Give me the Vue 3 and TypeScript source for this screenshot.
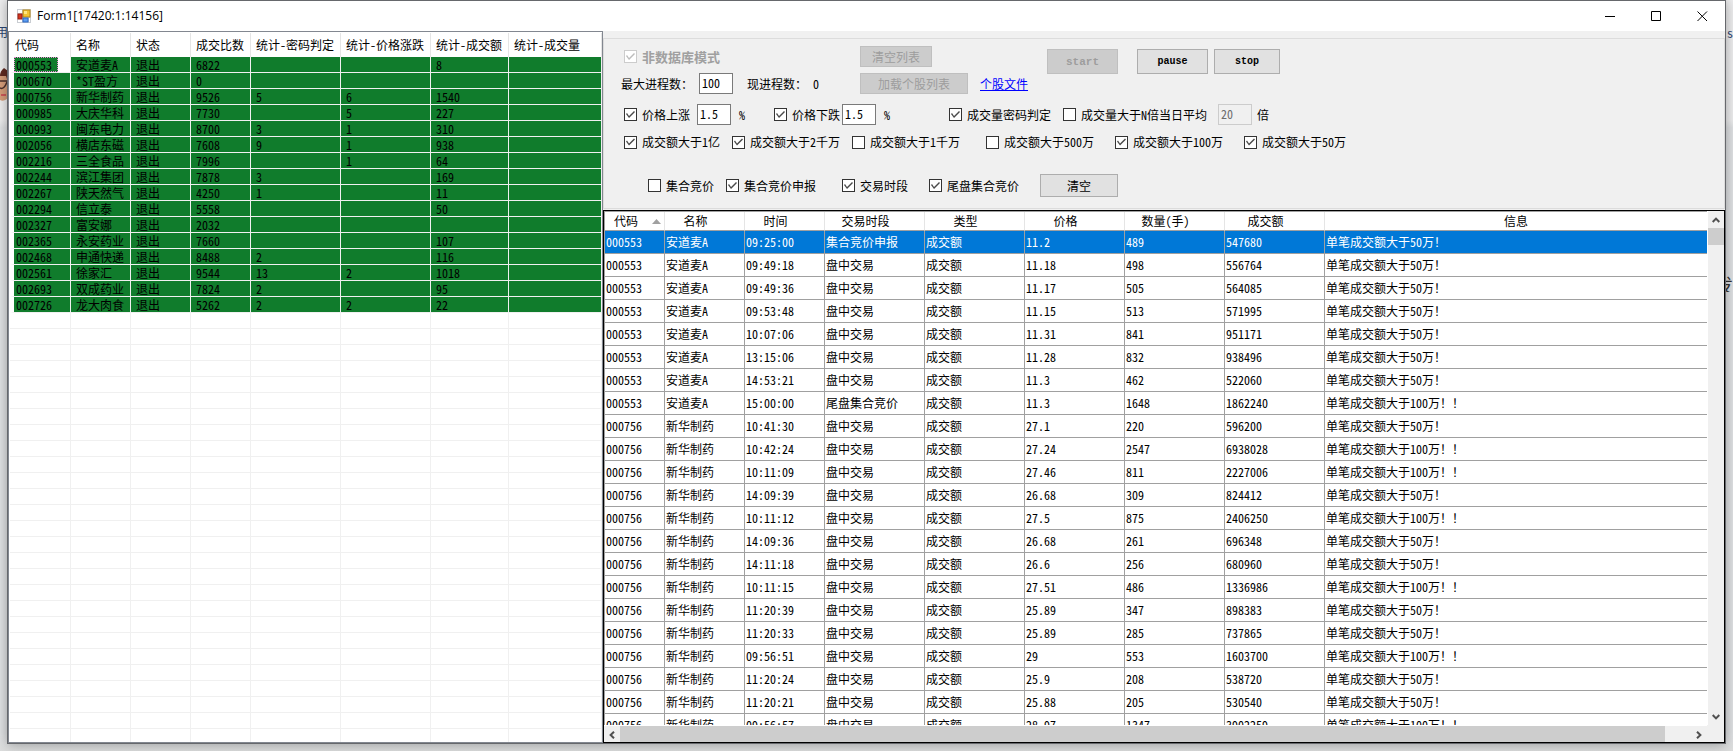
<script setup lang="ts">
import { ref } from 'vue'

interface Stock {
  code: string
  name: string
  count: string
  secret: string
  price: string
  amount: string
}

const stock = (line: string): Stock => {
  const [code, name, count, secret, price, amount] = line.split('|')
  return { code, name, count, secret, price, amount }
}

const stocks: Stock[] = [
  '000553|安道麦A|6822|||8',
  '000670|*ST盈方|0|||',
  '000756|新华制药|9526|5|6|1540',
  '000985|大庆华科|7730||5|227',
  '000993|闽东电力|8700|3|1|310',
  '002056|横店东磁|7608|9|1|938',
  '002216|三全食品|7996||1|64',
  '002244|滨江集团|7878|3||169',
  '002267|陕天然气|4250|1||11',
  '002294|信立泰|5558|||50',
  '002327|富安娜|2032|||',
  '002365|永安药业|7660|||107',
  '002468|申通快递|8488|2||116',
  '002561|徐家汇|9544|13|2|1018',
  '002693|双成药业|7824|2||95',
  '002726|龙大肉食|5262|2|2|22',
].map(stock)

const listHeads = ['代码', '名称', '状态', '成交比数', '统计-密码判定', '统计-价格涨跌', '统计-成交额', '统计-成交量']
const tradeHeads = ['代码', '名称', '时间', '交易时段', '类型', '价格', '数量(手)', '成交额', '信息']

const A = '安道麦A'
const X = '新华制药'
const MID = '盘中交易'

const raw: [string, string, string, string, string, string, string][] = [
  ['000553', A, '09:25:00', '集合竞价申报', '11.2', '489', '547680'],
  ['000553', A, '09:49:18', MID, '11.18', '498', '556764'],
  ['000553', A, '09:49:36', MID, '11.17', '505', '564085'],
  ['000553', A, '09:53:48', MID, '11.15', '513', '571995'],
  ['000553', A, '10:07:06', MID, '11.31', '841', '951171'],
  ['000553', A, '13:15:06', MID, '11.28', '832', '938496'],
  ['000553', A, '14:53:21', MID, '11.3', '462', '522060'],
  ['000553', A, '15:00:00', '尾盘集合竞价', '11.3', '1648', '1862240'],
  ['000756', X, '10:41:30', MID, '27.1', '220', '596200'],
  ['000756', X, '10:42:24', MID, '27.24', '2547', '6938028'],
  ['000756', X, '10:11:09', MID, '27.46', '811', '2227006'],
  ['000756', X, '14:09:39', MID, '26.68', '309', '824412'],
  ['000756', X, '10:11:12', MID, '27.5', '875', '2406250'],
  ['000756', X, '14:09:36', MID, '26.68', '261', '696348'],
  ['000756', X, '14:11:18', MID, '26.6', '256', '680960'],
  ['000756', X, '10:11:15', MID, '27.51', '486', '1336986'],
  ['000756', X, '11:20:39', MID, '25.89', '347', '898383'],
  ['000756', X, '11:20:33', MID, '25.89', '285', '737865'],
  ['000756', X, '09:56:51', MID, '29', '553', '1603700'],
  ['000756', X, '11:20:24', MID, '25.9', '208', '538720'],
  ['000756', X, '11:20:21', MID, '25.88', '205', '530540'],
  ['000756', X, '09:56:57', MID, '28.97', '1347', '3902259'],
]

const trades = raw.map(([code, name, time, phase, price, lots, amount]) => [
  code, name, time, phase, '成交额', price, lots, amount,
  Number(amount) > 1000000 ? '单笔成交额大于100万！！' : '单笔成交额大于50万！',
])

const selected = ref(0)
const limit = ref('100')
const riseBy = ref('1.5')
const fallBy = ref('1.5')
const times = ref('20')

const amountFilters = ref([
  { label: '成交额大于1亿', on: true },
  { label: '成交额大于2千万', on: true },
  { label: '成交额大于1千万', on: false },
  { label: '成交额大于500万', on: false },
  { label: '成交额大于100万', on: true },
  { label: '成交额大于50万', on: true },
])
const phaseFilters = ref([
  { label: '集合竞价', on: false },
  { label: '集合竞价申报', on: true },
  { label: '交易时段', on: true },
  { label: '尾盘集合竞价', on: true },
])
</script>

<template>
  <div class="desktop">
    <div class="behind behind-left" aria-hidden="true">
      <span class="scrap">用</span>
      <svg class="face" width="14" height="34" viewBox="0 0 14 34">
        <path d="M0 8 Q0 3 4 0 L8 3 L7 12 L0 12Z" fill="#612b22" />
        <path d="M0 8H6L8 14V30Q4 34 0 32Z" fill="#d9a07c" />
        <path d="M0 13H8M0 20Q4 22 7 14" stroke="#4b302c" stroke-width="1.5" fill="none" />
        <path d="M1 27H6" stroke="#cf5a5a" stroke-width="2" />
      </svg>
    </div>
    <div class="behind behind-right" aria-hidden="true">
      <span class="scrap">s</span>
      <span class="scrap big">发</span>
    </div>

    <main class="window">
      <header class="titlebar">
        <svg class="app-icon" width="14" height="14" viewBox="0 0 14 14">
          <rect x="0" y="0" width="14" height="14" fill="#c9cdd2" />
          <path d="M1 1H5V4H1ZM1 10H5V13H1ZM12 9H13V13H12Z" fill="#fff" />
          <rect x="6" y="1" width="7" height="7" fill="#f3c334" stroke="#b98a17" />
          <rect x="7" y="2" width="3" height="3" fill="#ffe680" />
          <rect x="1" y="5" width="4" height="5" fill="#d3371f" stroke="#9c1f12" />
          <rect x="6" y="9" width="5" height="4" fill="#5c9df0" stroke="#2d68c4" />
        </svg>
        <h1>Form1[17420:1:14156]</h1>
        <div class="win-buttons">
          <button type="button" aria-label="最小化"><svg width="11" height="11" viewBox="0 0 11 11"><path d="M0 5.5H10" stroke="#000" fill="none" /></svg></button>
          <button type="button" aria-label="最大化"><svg width="11" height="11" viewBox="0 0 11 11"><path d="M.5 .5H9.5V9.5H.5Z" stroke="#000" fill="none" /></svg></button>
          <button type="button" aria-label="关闭"><svg width="11" height="11" viewBox="0 0 11 11"><path d="M.5 .5L10 10M10 .5L.5 10" stroke="#000" fill="none" /></svg></button>
        </div>
      </header>

      <div class="body">
        <section class="list">
          <table>
            <colgroup>
              <col class="l-first"><col class="l-s"><col class="l-s"><col class="l-s">
              <col class="l-m"><col class="l-m"><col class="l-n"><col>
            </colgroup>
            <thead>
              <tr><th v-for="h in listHeads" :key="h">{{ h }}</th></tr>
            </thead>
            <tbody>
              <tr v-for="(s, i) in stocks" :key="s.code" class="filled" :class="{ focus: i === 0 }">
                <td><span>{{ s.code }}</span></td>
                <td>{{ s.name }}</td>
                <td>退出</td>
                <td>{{ s.count }}</td>
                <td>{{ s.secret }}</td>
                <td>{{ s.price }}</td>
                <td>{{ s.amount }}</td>
                <td></td>
              </tr>
              <tr v-for="n in 40" :key="n"><td v-for="h in listHeads" :key="h"></td></tr>
            </tbody>
          </table>
        </section>

        <section class="right">
          <form class="controls" @submit.prevent>
            <div class="top">
              <div class="top-left">
                <div class="row row-a">
                  <label class="check strong off"><input type="checkbox" checked disabled>非数据库模式</label>
                  <button type="button" class="btn" disabled>清空列表</button>
                </div>
                <div class="row row-b">
                  <label for="limit">最大进程数：</label>
                  <input id="limit" v-model="limit" class="box" type="text">
                  <span>现进程数：</span>
                  <span>0</span>
                  <button type="button" class="btn" disabled>加载个股列表</button>
                  <a href="#">个股文件</a>
                </div>
              </div>
              <div class="actions">
                <button type="button" class="btn" disabled>start</button>
                <button type="button" class="btn">pause</button>
                <button type="button" class="btn">stop</button>
              </div>
            </div>
            <div class="row row-c">
              <label class="check"><input type="checkbox" checked>价格上涨</label>
              <input v-model="riseBy" class="box" type="text" aria-label="价格上涨">
              <span>%</span>
              <label class="check"><input type="checkbox" checked>价格下跌</label>
              <input v-model="fallBy" class="box" type="text" aria-label="价格下跌">
              <span>%</span>
              <label class="check"><input type="checkbox" checked>成交量密码判定</label>
              <label class="check"><input type="checkbox">成交量大于N倍当日平均</label>
              <input v-model="times" class="box" type="text" aria-label="倍数" disabled>
              <span>倍</span>
            </div>
            <div class="row row-d">
              <label v-for="f in amountFilters" :key="f.label" class="check"><input v-model="f.on" type="checkbox">{{ f.label }}</label>
            </div>
            <div class="row row-e">
              <label v-for="f in phaseFilters" :key="f.label" class="check"><input v-model="f.on" type="checkbox">{{ f.label }}</label>
              <button type="button" class="btn">清空</button>
            </div>
          </form>

          <div class="grid">
            <div class="grid-view">
              <table>
                <colgroup>
                  <col class="g-code"><col class="g-name"><col class="g-name">
                  <col class="g-m"><col class="g-m"><col class="g-m"><col class="g-m"><col class="g-m"><col>
                </colgroup>
                <thead>
                  <tr>
                    <th v-for="(h, i) in tradeHeads" :key="h">
                      <div>{{ h }}<svg v-if="i === 0" width="9" height="5" viewBox="0 0 9 5"><path d="M0 5L4.5 0L9 5Z" fill="#a0a0a0" /></svg></div>
                    </th>
                  </tr>
                </thead>
                <tbody>
                  <tr v-for="(t, i) in trades" :key="i" :class="{ selected: i === selected }" @click="selected = i">
                    <td v-for="(c, j) in t" :key="j">{{ c }}</td>
                  </tr>
                </tbody>
              </table>
            </div>
            <div class="vbar">
              <button type="button" aria-label="向上"><svg width="8" height="6" viewBox="0 0 8 6"><path d="M.7 5L4 1.6L7.3 5" /></svg></button>
              <div class="v-thumb"></div>
              <div class="v-track"></div>
              <button type="button" aria-label="向下"><svg width="8" height="6" viewBox="0 0 8 6"><path d="M.7 1L4 4.4L7.3 1" /></svg></button>
            </div>
            <div class="hbar">
              <button type="button" aria-label="向左"><svg width="6" height="8" viewBox="0 0 6 8"><path d="M5 .7L1.6 4L5 7.3" /></svg></button>
              <div class="h-thumb"></div>
              <div class="h-track"></div>
              <button type="button" aria-label="向右"><svg width="6" height="8" viewBox="0 0 6 8"><path d="M1 .7L4.4 4L1 7.3" /></svg></button>
            </div>
            <div class="corner"></div>
          </div>
        </section>
      </div>
    </main>
  </div>
</template>

<style>
html,
body {
  margin: 0;
}
</style>

<style scoped>
* {
  box-sizing: border-box;
}

.desktop {
  position: relative;
  height: 100vh;
  padding: 0 7px 7px;
  overflow: hidden;
  background: linear-gradient(#f0f0f1 0 16%, #e2e4e6 17% 98%, #dcdddd);
  color: #000;
  font-family: "Noto Sans CJK SC", sans-serif;
  font-size: 12px;
  line-height: 16px;
  font-feature-settings: "hwid";
}

.behind {
  position: absolute;
  top: 0;
  width: 8px;
  overflow: hidden;
}

.behind-left {
  left: 0;
  padding-top: 24px;
}

.behind-right {
  right: 0;
  padding: 25px 0 0 2px;
}

.scrap {
  display: block;
  color: #2c4570;
}

.behind-left .scrap {
  margin-left: -4px;
}

.scrap.big {
  margin: 235px 0 0 -12px;
  color: #333;
  font-size: 18px;
}

.face {
  display: block;
  margin-top: 28px;
}

.window {
  position: relative;
  display: flex;
  flex-direction: column;
  height: 100%;
  border: 1px solid #66686c;
  background: #f0f0f0;
  box-shadow: 0 0 12px rgba(0, 0, 0, 0.35);
}

.titlebar {
  display: flex;
  align-items: center;
  flex: none;
  height: 30px;
  padding-left: 9px;
  background: #fff;
}

h1 {
  flex: 1;
  margin: 0 0 0 6px;
  font: 400 12px/16px "Open Sans", "Noto Sans", sans-serif;
}

.win-buttons {
  display: flex;
}

button {
  padding: 0;
  border: 0;
  background: none;
  color: inherit;
  font: inherit;
  font-feature-settings: inherit;
}

.win-buttons button {
  display: flex;
  align-items: center;
  justify-content: center;
  width: 46px;
  height: 28px;
}

.body {
  display: flex;
  flex: 1;
  min-height: 0;
}

table {
  width: 100%;
  border-spacing: 0;
  table-layout: fixed;
}

th,
td {
  padding: 0;
  overflow: hidden;
  font-weight: 400;
  white-space: nowrap;
}

.list {
  flex: 0 0 595px;
  padding: 1px 0 1px 1px;
  overflow: hidden;
  border: 1px solid #828790;
  background: #fff;
}

.l-first { width: 61px; }
.l-s { width: 60px; }
.l-m { width: 90px; }
.l-n { width: 78px; }

.list th {
  height: 24px;
  padding-left: 5px;
  border-right: 1px solid #e5e5e5;
  text-align: left;
}

.list td {
  height: 16px;
  padding-left: 5px;
  border-right: 1px solid #f0f0f0;
  border-bottom: 1px solid #f0f0f0;
  line-height: 15px;
}

.list .filled td {
  background: #107c2c;
}

.list .filled td:first-child {
  padding-left: 2px;
  border-left: 4px solid #fff;
}

.list .focus td:first-child {
  padding: 0;
  background: #fff;
}

.focus span {
  display: block;
  width: 44px;
  height: 15px;
  padding-left: 1px;
  border: 1px dotted #ef83d3;
  background: #107c2c;
  line-height: 13px;
}

.right {
  display: flex;
  flex: 1;
  flex-direction: column;
  min-width: 0;
  padding-top: 7px;
}

.controls {
  flex: none;
  margin-bottom: 1px;
  padding: 7px 0 11px;
  border: 1px solid #dcdcdc;
}

.top {
  display: flex;
}

.top-left {
  flex: 0 0 443px;
}

.actions {
  display: flex;
  align-items: flex-start;
  padding-top: 3px;
}

.actions .btn {
  width: 71px;
  height: 25px;
  font-family: "Liberation Mono", monospace;
  font-size: 10px;
  font-weight: 700;
}

.actions .btn:disabled {
  font-size: 11px;
}

.actions .btn + .btn {
  margin-left: 19px;
}

.actions .btn + .btn + .btn {
  width: 66px;
  margin-left: 6px;
}

.row {
  display: grid;
  align-items: center;
  justify-items: start;
  white-space: nowrap;
}

.row-a {
  grid-template-columns: 236px 1fr;
  padding-left: 20px;
}

.row-b {
  grid-template-columns: 78px 48px 66px 47px 120px 1fr;
  margin-top: 6px;
  padding-left: 17px;
}

.row-c {
  grid-template-columns: 73px 42px 35px 68px 42px 65px 114px 155px 39px 1fr;
  margin-top: 10px;
  padding-left: 20px;
}

.row-d {
  grid-template-columns: 108px 120px 134px 129px 129px 1fr;
  margin-top: 9px;
  padding-left: 20px;
}

.row-e {
  grid-template-columns: 78px 116px 87px 111px 1fr;
  margin-top: 24px;
  padding-left: 44px;
}

.btn {
  height: 21px;
  border: 1px solid #adadad;
  background: #e1e1e1;
}

.btn:disabled {
  border-color: #bfbfbf;
  background: #ccc;
  color: #9d9d9d;
}

.row-a .btn { width: 72px; }
.row-b .btn { width: 108px; }
.row-e .btn { width: 78px; height: 23px; }

.check {
  display: flex;
  align-items: center;
  gap: 5px;
}

.check.strong {
  font-size: 13px;
  font-weight: 700;
}

.off {
  color: #a0a0a0;
}

.check input {
  width: 13px;
  height: 13px;
  margin: 0;
  appearance: none;
  border: 1px solid #333;
  background: #fff;
}

.check input:checked::before {
  display: block;
  width: 11px;
  height: 11px;
  background: #4a4a4a;
  clip-path: polygon(1px 5px, 2px 4px, 4px 7px, 9px 2px, 10px 3px, 4px 9px);
  content: "";
}

.check input:disabled {
  border-color: #ccc;
}

.check input:disabled::before {
  background: #bcbcbc;
}

.box {
  width: 34px;
  height: 21px;
  padding: 0 2px 2px;
  border: 1px solid #7a7a7a;
  border-radius: 0;
  background: #fff;
  color: #000;
  font: inherit;
  font-feature-settings: inherit;
}

.box:disabled {
  border-color: #ccc;
  background: #f0f0f0;
  color: #6d6d6d;
}

a {
  color: #00f;
}

.grid {
  display: grid;
  flex: 1;
  grid-template: minmax(0, 1fr) 17px / minmax(0, 1fr) 17px;
  min-height: 0;
  border: 1px solid #000;
  background: #fff;
}

.grid-view {
  overflow: hidden;
  border-top: 1px solid #a0a0a0;
  border-left: 1px solid #a0a0a0;
}

.g-code { width: 60px; }
.g-name { width: 80px; }
.g-m { width: 100px; }

.grid th {
  height: 19px;
  border-right: 1px solid #e5e5e5;
  border-bottom: 1px solid #a0a0a0;
}

.grid th div {
  display: flex;
  align-items: center;
  justify-content: center;
  gap: 14px;
  padding-right: 18px;
}

.grid th:first-child div {
  padding: 0 3px 0 0;
  justify-content: flex-end;
}

.grid th:last-child div {
  padding-right: 0;
}

.grid td {
  height: 23px;
  padding-left: 1px;
  border-right: 1px solid #a0a0a0;
  border-bottom: 1px solid #a0a0a0;
}

.grid th:last-child,
.grid td:last-child {
  border-right: 0;
}

.selected td {
  background: #0078d7;
  color: #fff;
}

.vbar,
.hbar {
  display: flex;
  background: #f0f0f0;
}

.vbar {
  flex-direction: column;
  width: 16px;
  margin-left: 1px;
}

.hbar {
  height: 16px;
  margin-top: 1px;
}

.corner {
  background: #f0f0f0;
}

.vbar button,
.hbar button {
  display: flex;
  flex: none;
  align-items: center;
  justify-content: center;
  width: 16px;
  height: 17px;
}

.vbar path,
.hbar path {
  fill: none;
  stroke: #505050;
  stroke-width: 2;
}

.v-thumb {
  height: 17px;
  background: #cdcdcd;
}

.v-track {
  flex: 1;
}

.h-thumb {
  flex: 1;
  background: #cdcdcd;
}

.h-track {
  flex: 0 0 26px;
}
</style>
